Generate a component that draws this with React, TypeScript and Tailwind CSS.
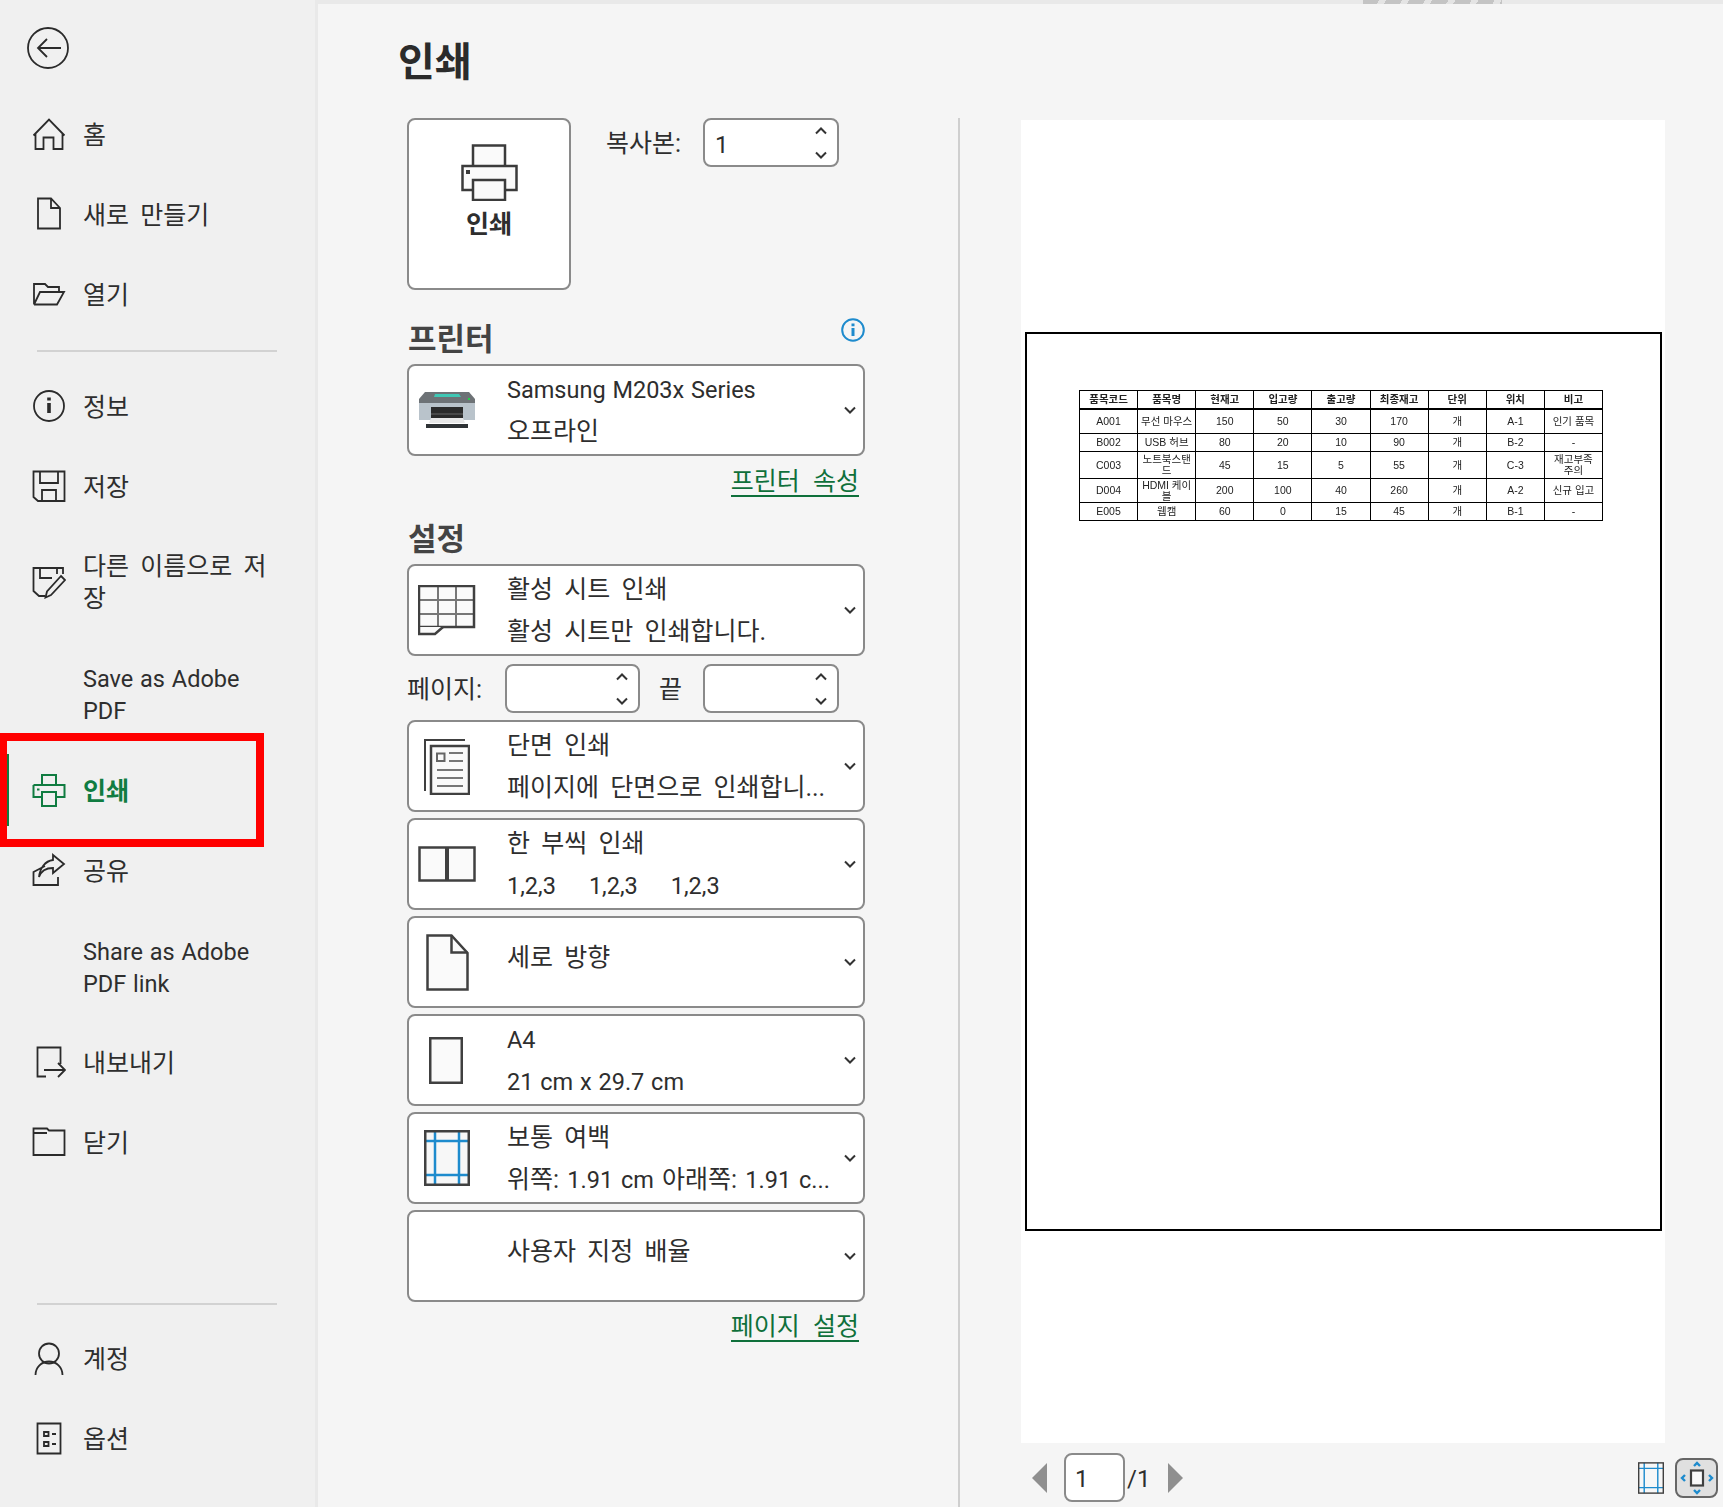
import React from "react";

const Ic = ({ children, c = "#2b2b2b", w = 1.8 }: { children: React.ReactNode; c?: string; w?: number }) => (
  <svg viewBox="0 0 34 34" fill="none" stroke={c} strokeWidth={w} className="w-[34px] h-[34px] shrink-0">
    {children}
  </svg>
);

const icons: Record<string, React.ReactNode> = {
  home: <Ic><path d="M1.5 18.5 17 2.5 32.5 18.5M3.5 16.5V32H11.5V20.5H21.5V32H30.5V16.5" /></Ic>,
  doc: <Ic><path d="M6 1.5H19L28 11V31.5H6ZM19 1.5V11H28" /></Ic>,
  open: <Ic><path d="M2 27.5V7H13L16 10H27V15M2 27.5H25L32 15H8L2 27.5" /></Ic>,
  info: <Ic><circle cx="17" cy="17" r="15" /><path d="M15.2 14H18.8V24H15.2Z M15.2 8.5H18.8V11.5H15.2Z" fill="#2b2b2b" stroke="none" /></Ic>,
  save: <Ic><path d="M1.5 2.5H32.5V32H6L1.5 28ZM8 2.5V14H26V2.5M10 32V21H24V32" /></Ic>,
  saveas: <Ic><path d="M13 31H7L1.5 26V3H31V9M8 3V13H20M25 3V9M29 11 33 15 19 30 13.5 32.5 15 26.5Z" /></Ic>,
  print: <Ic c="#107c41" w={2}><path d="M10 12V2H24V12M1.5 12H32.5V24H24M10 24H1.5V12M10 19H24V33H10ZM5 16.5H7.5" /></Ic>,
  share: <Ic><path d="M13 13 1.5 19V32H26V24M21 2 32 11 21 20V15C14 15 9 18 7 24 8 15 13 8 21 7Z" /></Ic>,
  export: <Ic><path d="M14 31.5H5.5V2.5H28.5V19M12 25H32M26 18 33 25 26 32" /></Ic>,
  close: <Ic><path d="M1.5 30V3.5H15L17 5.5H32.5V30ZM1.5 8H15" /></Ic>,
  account: <Ic><circle cx="17" cy="12.5" r="10" /><path d="M3.5 34A13.5 13.5 0 0 1 30.5 34" /></Ic>,
  options: <Ic><path d="M5.5 2.5H28.5V32.5H5.5ZM12 11H16.5V15H12ZM12 21H16.5V25H12ZM20 13H24M20 23H24" /></Ic>,
};

const L = ({ children }: { children: React.ReactNode }) => (
  <span className="text-[23.5px] [word-spacing:1px]">{children}</span>
);

const Nav = ({ icon, h = "h-[80px]", children }: { icon?: string; h?: string; children: React.ReactNode }) => (
  <div className={`flex items-center pl-[32px] ${h}`}>
    <div className="w-[34px] h-[34px] shrink-0">{icon ? icons[icon] : null}</div>
    <div className="ml-[17px] mt-[3px] w-[190px] text-[25px] leading-[32px] [word-spacing:5px] text-[#2e2e2e]">{children}</div>
  </div>
);

const Rule = () => <div className="ml-[37px] w-[240px] h-[2px] bg-[#d2d2d2]" />;

const Chevron = ({ up = false }: { up?: boolean }) => (
  <svg viewBox="0 0 12 8" fill="none" stroke="#333" strokeWidth="2" className="w-[12px] h-[8px] shrink-0">
    <path d={up ? "M1 6.5 6 1.5 11 6.5" : "M1 1.5 6 6.5 11 1.5"} />
  </svg>
);

const Spin = ({ value, w }: { value?: string; w: string }) => (
  <div className={`${w} h-[49px] bg-white border-2 border-[#8a8a8a] rounded-[8px] flex items-center justify-between pl-[10px] pr-[10px] shrink-0`}>
    <span className="mt-[4px] text-[24px] text-[#2e2e2e]">{value}</span>
    <div className="flex flex-col gap-[16px]"><Chevron up /><Chevron /></div>
  </div>
);

const Select = ({ icon, l1, l2 }: { icon?: React.ReactNode; l1: React.ReactNode; l2?: React.ReactNode }) => (
  <div className="h-[92px] bg-white border-2 border-[#8a8a8a] rounded-[8px] flex items-center pr-[7px]">
    <div className="w-[78px] flex justify-center items-center shrink-0 ml-[-1px]">{icon}</div>
    <div className={`ml-[21px] flex-1 min-w-0 text-[25px] leading-[42px] [word-spacing:5px] text-[#2e2e2e] whitespace-nowrap ${l2 ? "mt-[2px]" : "mt-[-8px]"}`}>
      <div>{l1}</div>
      {l2 ? <div>{l2}</div> : null}
    </div>
    <Chevron />
  </div>
);

const S = "#404040";

const GridIcon = () => (
  <svg width="58" height="51" viewBox="0 0 58 51" fill="none">
    <rect x="1" y="1" width="55" height="41" fill="#fafafa" />
    <path d="M1 15H56M1 29H56M20 1V42M38 1V42" stroke="#777" strokeWidth="2" />
    <rect x="1" y="1" width="55" height="41" stroke={S} strokeWidth="2.5" />
    <path d="M1 42V49H17L25 42" stroke={S} strokeWidth="2.5" fill="#fafafa" />
  </svg>
);
const DuplexIcon = () => (
  <svg width="46" height="57" viewBox="0 0 46 57" fill="none">
    <path d="M1 53V2H41" stroke={S} strokeWidth="2" />
    <rect x="7" y="8" width="38" height="48" fill="#fafafa" stroke={S} strokeWidth="2.5" />
    <path d="M13 15.5H20.5V23H13Z" stroke="#666" strokeWidth="2" />
    <path d="M25 15H39M25 23H39M13 32H39M13 40H39M13 48H39" stroke="#777" strokeWidth="2" />
  </svg>
);
const CollateIcon = () => (
  <svg width="58" height="36" viewBox="0 0 58 36" fill="none">
    <rect x="1.5" y="1.5" width="55" height="33" fill="#fafafa" stroke={S} strokeWidth="2.5" />
    <path d="M29 1V35" stroke={S} strokeWidth="4" />
  </svg>
);
const PortraitIcon = () => (
  <svg width="43" height="57" viewBox="0 0 43 57" fill="none" stroke={S} strokeWidth="2.5">
    <path d="M1.5 1.5H25.5L41.5 19V55.5H1.5Z" fill="#fafafa" />
    <path d="M25.5 1.5V18.5H41.5" />
  </svg>
);
const A4Icon = () => (
  <svg width="34" height="47" viewBox="0 0 34 47" fill="none" className="ml-[-2px]">
    <rect x="1.25" y="1.25" width="31.5" height="44.5" fill="#fafafa" stroke={S} strokeWidth="2.5" />
  </svg>
);
const MarginIcon = ({ w = 46, h = 56 }: { w?: number; h?: number }) => (
  <svg width={w} height={h} viewBox="0 0 46 56" fill="none" className="shrink-0">
    <rect x="1.25" y="1.25" width="43.5" height="53.5" fill="#f7f7f7" />
    <path d="M11 1V55M35 1V55M1 11H45M1 45H45" stroke="#1e8bcd" strokeWidth="2.5" />
    <rect x="1.25" y="1.25" width="43.5" height="53.5" stroke={S} strokeWidth="2.5" />
  </svg>
);
const PrinterThumb = () => (
  <svg width="56" height="38" viewBox="0 0 56 38">
    <path d="M6 1H50L56 8V13H0V8Z" fill="#6d7276" />
    <path d="M16 3H40L42 6H15Z" fill="#3fc7b4" />
    <path d="M0 12H56V29H0Z" fill="#b9c3cb" />
    <rect x="49" y="7" width="2" height="2" fill="#22d34a" />
    <rect x="12" y="16" width="32" height="16" fill="#2b2b2b" />
    <path d="M12 23H44" stroke="#555" strokeWidth="1.5" />
    <path d="M12 27H44L46 32H10Z" fill="#e8e8e8" />
    <rect x="7" y="33" width="42" height="4" fill="#2f3336" />
  </svg>
);

const Link = ({ children }: { children: React.ReactNode }) => (
  <div className="flex justify-end pr-[6px]">
    <span className="text-[25px] leading-[27px] [word-spacing:7px] text-[#0f703b] border-b-2 border-[#0f703b]">{children}</span>
  </div>
);

const head = ["품목코드", "품목명", "현재고", "입고량", "출고량", "최종재고", "단위", "위치", "비고"];
const rows: [string[], string][] = [
  [["A001", "무선 마우스", "150", "50", "30", "170", "개", "A-1", "인기 품목"], "h-[25px]"],
  [["B002", "USB 허브", "80", "20", "10", "90", "개", "B-2", "-"], "h-[18px]"],
  [["C003", "노트북스탠드", "45", "15", "5", "55", "개", "C-3", "재고부족 주의"], "h-[27px]"],
  [["D004", "HDMI 케이블", "200", "100", "40", "260", "개", "A-2", "신규 입고"], "h-[24px]"],
  [["E005", "웹캠", "60", "0", "15", "45", "개", "B-1", "-"], "h-[18px]"],
];

const Sidebar = () => (
  <div className="w-[318px] shrink-0 h-full bg-[#f0f0f0] border-r-[3px] border-[#e9e9e9] flex flex-col relative">
    <div className="h-[94px] pl-[27px] pt-[27px]">
      <svg width="42" height="42" viewBox="0 0 42 42" fill="none" stroke="#2b2b2b" strokeWidth="1.8">
        <circle cx="21" cy="21" r="20" />
        <path d="M34 21H11M20 12 11 21 20 30" />
      </svg>
    </div>
    <Nav icon="home">홈</Nav>
    <Nav icon="doc">새로 만들기</Nav>
    <Nav icon="open">열기</Nav>
    <div className="mt-[16px] mb-[14px]"><Rule /></div>
    <Nav icon="info">정보</Nav>
    <Nav icon="save">저장</Nav>
    <Nav icon="saveas" h="h-[111px]"><span className="break-all">다른 이름으로 저장</span></Nav>
    <Nav h="h-[113px]"><L>Save as Adobe PDF</L></Nav>
    <div className="flex items-center pl-[32px] h-[80px]">
      {icons.print}
      <div className="ml-[17px] mt-[3px] text-[25px] leading-[31px] font-bold text-[#107c41]">인쇄</div>
    </div>
    <Nav icon="share">공유</Nav>
    <Nav h="h-[112px]"><L>Share as Adobe PDF link</L></Nav>
    <Nav icon="export">내보내기</Nav>
    <Nav icon="close">닫기</Nav>
    <div className="flex-1 flex flex-col justify-end pb-[13px]"><Rule /></div>
    <Nav icon="account">계정</Nav>
    <Nav icon="options">옵션</Nav>
    <div className="h-[29px]" />
    <div className="absolute left-0 top-[733px] w-[264px] h-[114px] border-[8px] border-l-[7px] border-[#ff0000]">
      <div className="absolute left-0 top-[13px] w-[2px] h-[72px] bg-[#107c41]" />
    </div>
  </div>
);

const Settings = () => (
  <div className="ml-[89px] w-[458px] shrink-0 flex flex-col">
    <div className="flex h-[172px]">
      <div className="w-[164px] h-[172px] bg-white border-2 border-[#8a8a8a] rounded-[8px] flex flex-col items-center pt-[24px]">
        <svg width="57" height="57" viewBox="0 0 57 57" fill="none" stroke="#3b3b3b" strokeWidth="2.5">
          <path d="M12 1.5H44V23H12Z" fill="#fafafa" />
          <path d="M1.5 22H55.5V46H1.5Z" fill="#fafafa" />
          <path d="M12 36H44V56H12Z" fill="#fafafa" />
          <rect x="5" y="26" width="4" height="4" fill="#3b3b3b" stroke="none" />
        </svg>
        <div className="mt-[7px] text-[25px] leading-[34px] font-bold text-[#2e2e2e]">인쇄</div>
      </div>
      <div className="ml-[35px] mt-[9px] w-[76px] shrink-0 whitespace-nowrap text-[25px] leading-[34px] text-[#2e2e2e]">복사본:</div>
      <div className="ml-[21px]"><Spin value="1" w="w-[136px]" /></div>
    </div>
    <div className="h-[74px] flex justify-between pl-[1px]">
      <div className="mt-[31px] text-[31px] leading-[38px] font-bold text-[#444]">프린터</div>
      <svg width="24" height="24" viewBox="0 0 24 24" fill="none" className="mt-[28px]">
        <circle cx="12" cy="12" r="10.8" stroke="#1e8bcd" strokeWidth="2" />
        <path d="M10.5 10H13.5V18H10.5ZM10.5 5.5H13.5V8.2H10.5Z" fill="#1e8bcd" />
      </svg>
    </div>
    <Select icon={<PrinterThumb />} l1={<L>Samsung M203x Series</L>} l2="오프라인" />
    <div className="h-[108px] flex flex-col">
      <div className="mt-[12px]"><Link>프린터 속성</Link></div>
      <div className="mt-[24px] pl-[1px] text-[31px] leading-[38px] font-bold text-[#444]">설정</div>
    </div>
    <Select icon={<GridIcon />} l1="활성 시트 인쇄" l2="활성 시트만 인쇄합니다." />
    <div className="mt-[8px] mb-[7px] flex items-center">
      <div className="w-[98px] mt-[3px] text-[25px] leading-[34px] text-[#2e2e2e]">페이지:</div>
      <Spin w="w-[135px]" />
      <div className="ml-[19px] w-[44px] mt-[3px] text-[25px] leading-[34px] text-[#2e2e2e]">끝</div>
      <Spin w="w-[136px]" />
    </div>
    <div className="flex flex-col gap-[6px]">
      <Select icon={<DuplexIcon />} l1="단면 인쇄" l2="페이지에 단면으로 인쇄합니..." />
      <Select icon={<CollateIcon />} l1="한 부씩 인쇄" l2={<span className="flex gap-[33px] text-[23.5px]"><span>1,2,3</span><span>1,2,3</span><span>1,2,3</span></span>} />
      <Select icon={<PortraitIcon />} l1="세로 방향" />
      <Select icon={<A4Icon />} l1={<L>A4</L>} l2={<L>21 cm x 29.7 cm</L>} />
      <Select icon={<MarginIcon />} l1="보통 여백" l2={<span className="[word-spacing:2px]">위쪽: <span className="text-[23.5px]">1.91 cm</span> 아래쪽: <span className="text-[23.5px]">1.91 c...</span></span>} />
      <Select l1="사용자 지정 배율" />
    </div>
    <div className="mt-[11px]"><Link>페이지 설정</Link></div>
  </div>
);

const Preview = () => (
  <div className="ml-[61px] w-[702px] shrink-0 flex flex-col mt-[2px]">
    <div className="w-[644px] h-[1323px] bg-white pt-[212px] pl-[4px]">
      <div className="w-[637px] h-[899px] border-2 border-black pl-[52px] pt-[56px]">
        <table className="w-[524px] table-fixed border-collapse border border-black text-[10.5px] leading-[11px] text-center text-[#222] blur-[0.3px] font-['Liberation_Sans','Noto_Sans_CJK_KR',sans-serif]">
          <tbody>
            <tr className="h-[18px] font-bold border-b-2 border-black">
              {head.map((t) => <td key={t} className="border border-black p-0">{t}</td>)}
            </tr>
            {rows.map(([cells, h]) => (
              <tr key={cells[0]} className={h}>
                {cells.map((t, i) => <td key={i} className={`border border-black px-[1px] py-0 ${i === 1 ? "break-all" : "[word-break:keep-all]"}`}>{t}</td>)}
              </tr>
            ))}
          </tbody>
        </table>
      </div>
    </div>
    <div className="mt-[10px] h-[49px] flex items-center pr-[5px]">
      <svg width="16" height="30" viewBox="0 0 16 30" className="ml-[11px] shrink-0"><path d="M15 0V30L0 15Z" fill="#8f8f8f" /></svg>
      <div className="ml-[16px] w-[61px] h-[49px] shrink-0 bg-white border-2 border-[#8a8a8a] rounded-[8px] flex items-center pl-[9px] pt-[3px] text-[24px] text-[#2e2e2e]">1</div>
      <span className="w-[20px] shrink-0 text-[24px] pt-[3px] text-[#2e2e2e] ml-[2px]">/1</span>
      <svg width="16" height="30" viewBox="0 0 16 30" className="ml-[20px] shrink-0"><path d="M1 0V30L16 15Z" fill="#8f8f8f" /></svg>
      <div className="ml-auto shrink-0"><MarginIcon w={26} h={32} /></div>
      <div className="ml-[11px] w-[43px] h-[40px] shrink-0 bg-[#e0e0e0] border-2 border-[#666] rounded-[8px] flex items-center justify-center">
        <svg width="36" height="34" viewBox="0 0 36 34" fill="none">
          <path d="M15 5 18 2 21 5M15 29 18 32 21 29M6 14 3 17 6 20M30 14 33 17 30 20" stroke="#1e8bcd" strokeWidth="2.4" />
          <rect x="12" y="9.5" width="12" height="15" fill="#fafafa" stroke={S} strokeWidth="2.2" />
        </svg>
      </div>
    </div>
  </div>
);

export default function App() {
  return (
    <div className="w-[1723px] h-[1507px] overflow-hidden flex font-['Roboto','Noto_Sans_CJK_KR',sans-serif] bg-[#f0f0f0]">
      <Sidebar />
      <div className="flex-1 min-w-0 flex flex-col">
        <div className="h-[4px] shrink-0 bg-[#e9e9e9]">
          <div className="ml-[1045px] w-[139px] h-[4px] bg-[repeating-linear-gradient(120deg,#c4c4c4_0px,#c4c4c4_14px,#e4e4e4_14px,#e4e4e4_20px)]" />
        </div>
        <div className="flex-1 min-h-0 bg-[#f5f5f5] flex flex-col">
          <div className="h-[114px] shrink-0 pl-[80px] pt-[34px] text-[40px] leading-[50px] font-bold text-[#2b2b2b]">인쇄</div>
          <div className="flex flex-1 min-h-0">
            <Settings />
            <div className="ml-[93px] w-[2px] bg-[#cfcfcf] shrink-0" />
            <Preview />
          </div>
        </div>
      </div>
    </div>
  );
}
